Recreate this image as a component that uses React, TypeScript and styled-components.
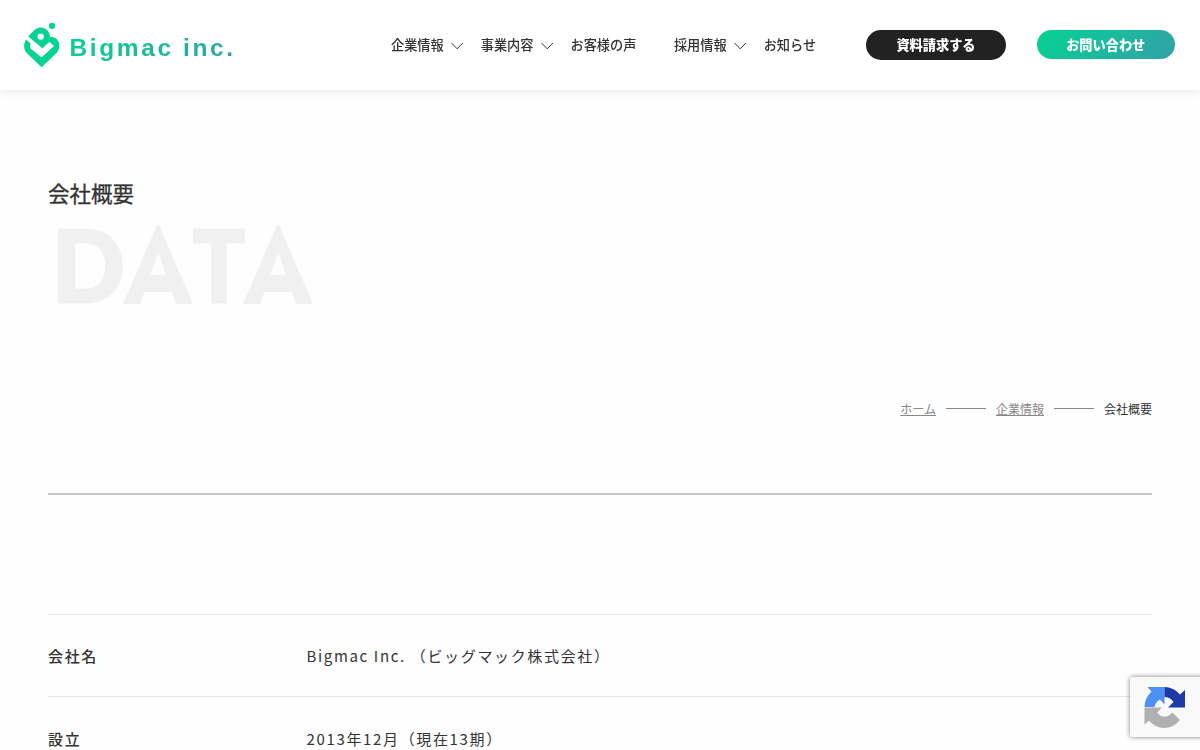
import React from "react";
import styled, { createGlobalStyle } from "styled-components";

const GlobalStyle = createGlobalStyle`
  *, *::before, *::after { box-sizing: border-box; }
  html, body { margin: 0; padding: 0; height: 750px; overflow: hidden; }
  body {
    background: #fefefe;
    color: #333;
    font-family: "Noto Sans CJK JP", sans-serif;
  }
  a { color: inherit; }
`;

const Header = styled.header`
  position: relative;
  z-index: 1;
  will-change: transform;
  display: flex;
  align-items: center;
  height: 90px;
  padding: 0 25px 0 24px;
  background: #fff;
  box-shadow: 0 0 10px rgba(0, 0, 0, 0.12);
`;

const Logo = styled.a`
  display: flex;
  align-items: center;
  width: 367px;
  flex: none;
  text-decoration: none;
`;

const LogoMark = styled.svg`
  display: block;
  flex: none;
  width: 36px;
  height: 46px;
`;

const LogoText = styled.span`
  margin: 5px 0 0 9.5px;
  font: bold 24.5px/34px "Liberation Sans", sans-serif;
  letter-spacing: 2.6px;
  white-space: nowrap;
  color: transparent;
  background: linear-gradient(135deg, #04d392, #33a0a8);
  background-clip: text;
  -webkit-background-clip: text;
`;

const Nav = styled.nav`
  display: flex;
  align-items: center;
  flex: 1;
`;

const NavItem = styled.a<{ $gap: number }>`
  display: flex;
  align-items: center;
  margin-right: ${(p) => p.$gap}px;
  font-size: 13.2px;
  font-weight: 500;
  line-height: 20px;
  color: #333;
  text-decoration: none;
  white-space: nowrap;
`;

const Chevron = styled.svg`
  display: block;
  width: 14px;
  height: 8px;
  margin: 2px 0 0 6px;
`;

const Actions = styled.div`
  display: flex;
  align-items: center;
  gap: 30.5px;
`;

const Pill = styled.a<{ $primary?: boolean }>`
  display: flex;
  align-items: center;
  justify-content: center;
  width: ${(p) => (p.$primary ? 138.5 : 140)}px;
  height: ${(p) => (p.$primary ? 29 : 30)}px;
  margin-bottom: ${(p) => (p.$primary ? 1 : 0)}px;
  padding-bottom: 1px;
  border-radius: 15px;
  background: ${(p) => (p.$primary ? "linear-gradient(135deg, #04d392, #33a0a8)" : "#222")};
  color: #fff;
  font-size: 13.2px;
  font-weight: 900;
  text-decoration: none;
`;

const Main = styled.main`
  padding: 85px 48px 0;
`;

const PageTitle = styled.h1`
  margin: 0;
  font-size: 21.5px;
  font-weight: 400;
  line-height: 36px;
  -webkit-text-stroke: 0.3px #333;
`;

const Watermark = styled.div`
  display: flex;
  height: 96px;
  margin: 8px 0 0 4px;
  font: 900 99.5px/90px Lato, sans-serif;
  color: #f0f0f0;
  -webkit-text-stroke: 3px #f0f0f0;
`;

const Letter = styled.span<{ $w: number; $sx: number }>`
  width: ${(p) => p.$w}px;
  transform: scaleX(${(p) => p.$sx});
  transform-origin: left;
`;

const PointedLetter = styled.span`
  display: flex;
  justify-content: center;
  width: 70px;
  font-size: 110px;
  line-height: 93px;
  -webkit-text-stroke-width: 6px;
  clip-path: polygon(34px 6px, 36px 6px, 70px 85px, 0 85px);
`;

const Breadcrumb = styled.nav`
  display: flex;
  justify-content: flex-end;
  align-items: center;
  gap: 10px;
  margin-top: 84px;
  font-size: 12px;
  line-height: 20px;
`;

const Crumb = styled.a`
  color: #888;
  text-decoration: underline;
`;

const CrumbLine = styled.span`
  width: 40px;
  height: 1px;
  margin-bottom: 2px;
  background: #888;
`;

const Divider = styled.hr`
  height: 2px;
  margin: 74px 0 119px;
  border: 0;
  background: #c5c5c5;
`;

const DataList = styled.dl`
  margin: 0;
  border-top: 1px solid #e4e4e4;
`;

const DataRow = styled.div`
  display: flex;
  align-items: center;
  height: 82px;
  border-bottom: 1px solid #e4e4e4;
  font-size: 15px;
  letter-spacing: 1.65px;

  & + & {
    height: 84px;
  }
`;

const Term = styled.dt`
  width: 258.5px;
  font-weight: 500;
`;

const Value = styled.dd`
  margin: 0;
`;

const Badge = styled.aside`
  position: fixed;
  right: -186px;
  bottom: 13px;
  width: 256px;
  height: 60px;
  padding: 9px 14px;
  border-radius: 2px;
  background: #f9f9f9;
  box-shadow: 0 0 5px gray;
`;

const navItems = [
  { label: "企業情報", menu: true, gap: 17 },
  { label: "事業内容", menu: true, gap: 17 },
  { label: "お客様の声", menu: false, gap: 37.5 },
  { label: "採用情報", menu: true, gap: 17 },
  { label: "お知らせ", menu: false, gap: 0 },
];

const rows = [
  ["会社名", "Bigmac Inc. （ビッグマック株式会社）"],
  ["設立", "2013年12月（現在13期）"],
];

export default function App() {
  return (
    <>
      <GlobalStyle />
      <Header>
        <Logo href="#">
          <LogoMark viewBox="0 0 36 46" fill="#04d392">
            <circle cx="28" cy="3.8" r="3.1" />
            <path
              fillRule="evenodd"
              d="M4 14.5 11 7.6C17 3 25.5 6.5 26 14.8L17.5 25.5 9 18.5ZM16.7 11.4a3.2 3.2 0 1 0 0 6.4 3.2 3.2 0 0 0 0-6.4Z"
            />
            <path d="M2.3 17.6 6.5 21.4 6.2 26.2 17.5 35.2 30 24 25.9 20.2 17.5 28.2 17.5 23.5 26 14.8C32.5 14.8 35.4 19.4 35.4 23.8 35.4 27.5 33.8 29.8 32 31.6L17.6 45.2 3.2 31.6C-.6 27.8-.9 22 2.3 17.6Z" />
            <path d="M2.3 16.3 4.1 14.4 17.5 27.1 25.2 20 29.2 24.2 17.5 35 6.2 24.5 7.2 20.8Z" fill="#fff" />
          </LogoMark>
          <LogoText>Bigmac inc.</LogoText>
        </Logo>
        <Nav>
          {navItems.map((n) => (
            <NavItem key={n.label} href="#" $gap={n.gap}>
              {n.label}
              {n.menu && (
                <Chevron viewBox="0 0 14 8" fill="none" stroke="#333">
                  <path d="m1.5 1 5.7 5.8L12.9 1" />
                </Chevron>
              )}
            </NavItem>
          ))}
        </Nav>
        <Actions>
          <Pill href="#">資料請求する</Pill>
          <Pill href="#" $primary>お問い合わせ</Pill>
        </Actions>
      </Header>
      <Main>
        <PageTitle>会社概要</PageTitle>
        <Watermark>
          <Letter $w={71} $sx={0.96}>D</Letter>
          <PointedLetter>A</PointedLetter>
          <Letter $w={50} $sx={0.86}>T</Letter>
          <PointedLetter>A</PointedLetter>
        </Watermark>
        <Breadcrumb>
          <Crumb href="#">ホーム</Crumb>
          <CrumbLine />
          <Crumb href="#">企業情報</Crumb>
          <CrumbLine />
          <span>会社概要</span>
        </Breadcrumb>
        <Divider />
        <DataList>
          {rows.map(([term, value]) => (
            <DataRow key={term}>
              <Term>{term}</Term>
              <Value>{value}</Value>
            </DataRow>
          ))}
        </DataList>
      </Main>
      <Badge>
        <svg width="42" height="42" viewBox="0 0 42 42">
          <path fill="#4a90f5" d="M20.5 1v17.5L16 13.5Q11 16.5 10.5 21H.5Q.5 12.5 7.5 5.5L3.5 1Z" />
          <path fill="#1c3aa9" d="M20.5 1Q29.5 1 36 8.5L41 4v17.5H24L29.5 16Q26 11 20.5 11Z" />
          <path fill="#b0b0b0" d="M.5 21.5H18L13 26.5Q20 35 28.5 26.5L36 34Q29 42 20.5 42 11 42 5 34.5L.5 38.5Z" />
        </svg>
      </Badge>
    </>
  );
}
